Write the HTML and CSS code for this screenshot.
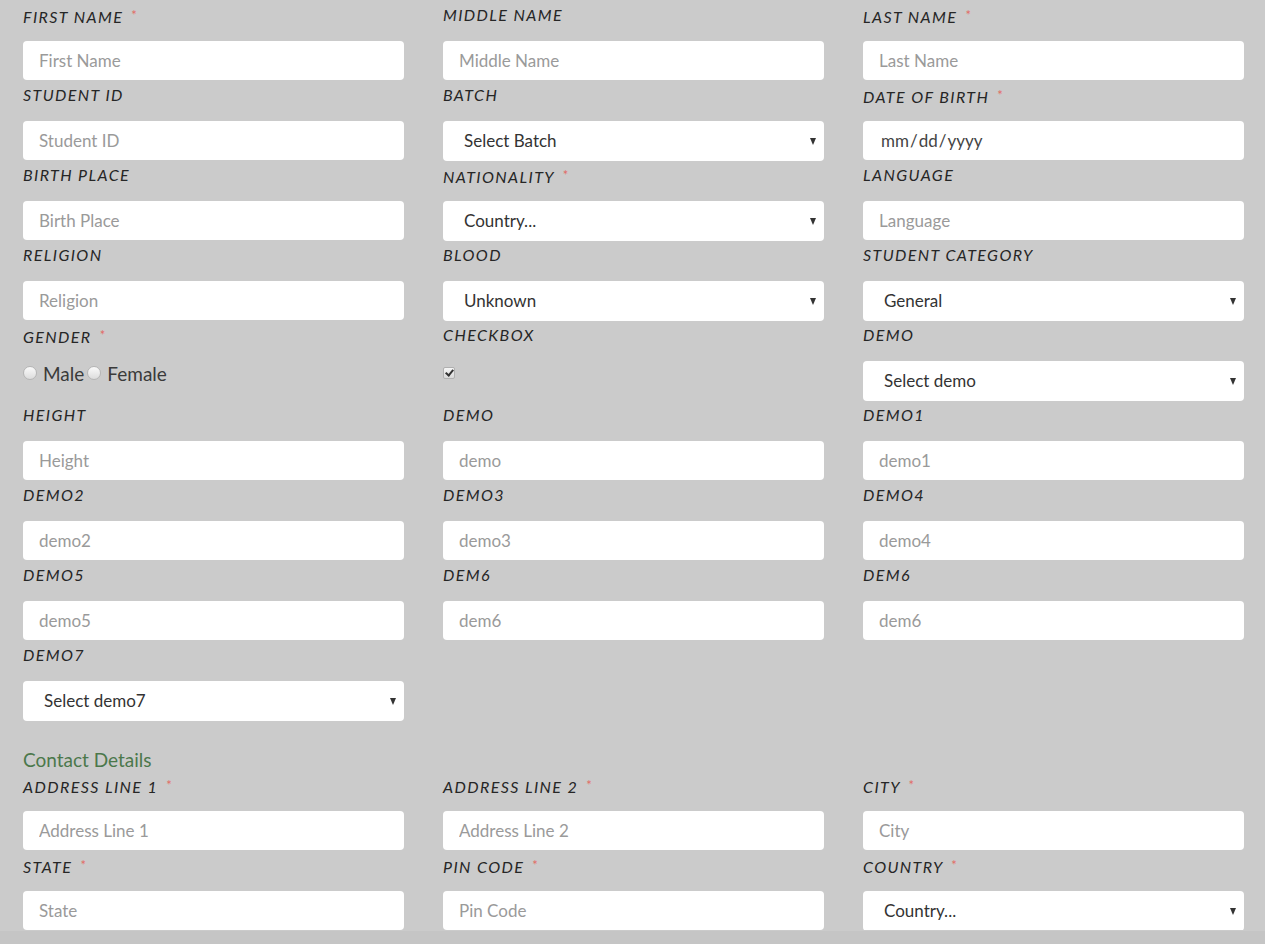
FILE: index.html
```html
<!DOCTYPE html>
<html lang="en">
<head>
<meta charset="utf-8">
<title>Student Form</title>
<link rel="stylesheet" href="styles.css">
</head>
<body>
<form class="form">
  <div class="grid">
    <div class="field"><label class="lbl">First Name <span class="req">*</span></label><input class="ctl" placeholder="First Name"></div>
    <div class="field"><label class="lbl">Middle Name</label><input class="ctl" placeholder="Middle Name"></div>
    <div class="field"><label class="lbl">Last Name <span class="req">*</span></label><input class="ctl" placeholder="Last Name"></div>

    <div class="field"><label class="lbl">Student ID</label><input class="ctl" placeholder="Student ID"></div>
    <div class="field"><label class="lbl">Batch</label><div class="sel"><select class="ctl"><option>Select Batch</option></select></div></div>
    <div class="field"><label class="lbl">Date of Birth <span class="req">*</span></label><input class="ctl date" type="date"></div>

    <div class="field"><label class="lbl">Birth Place</label><input class="ctl" placeholder="Birth Place"></div>
    <div class="field"><label class="lbl">Nationality <span class="req">*</span></label><div class="sel"><select class="ctl"><option>Country...</option></select></div></div>
    <div class="field"><label class="lbl">Language</label><input class="ctl" placeholder="Language"></div>

    <div class="field"><label class="lbl">Religion</label><input class="ctl" placeholder="Religion"></div>
    <div class="field"><label class="lbl">Blood</label><div class="sel"><select class="ctl"><option>Unknown</option></select></div></div>
    <div class="field"><label class="lbl">Student Category</label><div class="sel"><select class="ctl"><option>General</option></select></div></div>

    <div class="field"><label class="lbl">Gender <span class="req">*</span></label>
      <div class="choice"><label class="opt"><input type="radio" name="g" class="radio">Male</label><label class="opt"><input type="radio" name="g" class="radio">Female</label></div>
    </div>
    <div class="field"><label class="lbl">Checkbox</label><div class="choice"><input type="checkbox" class="check" checked></div></div>
    <div class="field"><label class="lbl">Demo</label><div class="sel"><select class="ctl"><option>Select demo</option></select></div></div>

    <div class="field"><label class="lbl">Height</label><input class="ctl" placeholder="Height"></div>
    <div class="field"><label class="lbl">Demo</label><input class="ctl" placeholder="demo"></div>
    <div class="field"><label class="lbl">Demo1</label><input class="ctl" placeholder="demo1"></div>

    <div class="field"><label class="lbl">Demo2</label><input class="ctl" placeholder="demo2"></div>
    <div class="field"><label class="lbl">Demo3</label><input class="ctl" placeholder="demo3"></div>
    <div class="field"><label class="lbl">Demo4</label><input class="ctl" placeholder="demo4"></div>

    <div class="field"><label class="lbl">Demo5</label><input class="ctl" placeholder="demo5"></div>
    <div class="field"><label class="lbl">Dem6</label><input class="ctl" placeholder="dem6"></div>
    <div class="field"><label class="lbl">Dem6</label><input class="ctl" placeholder="dem6"></div>

    <div class="field"><label class="lbl">Demo7</label><div class="sel"><select class="ctl"><option>Select demo7</option></select></div></div>
  </div>

  <h3 class="section">Contact Details</h3>
  <div class="grid">
    <div class="field"><label class="lbl">Address Line 1 <span class="req">*</span></label><input class="ctl" placeholder="Address Line 1"></div>
    <div class="field"><label class="lbl">Address Line 2 <span class="req">*</span></label><input class="ctl" placeholder="Address Line 2"></div>
    <div class="field"><label class="lbl">City <span class="req">*</span></label><input class="ctl" placeholder="City"></div>

    <div class="field"><label class="lbl">State <span class="req">*</span></label><input class="ctl" placeholder="State"></div>
    <div class="field"><label class="lbl">Pin Code <span class="req">*</span></label><input class="ctl" placeholder="Pin Code"></div>
    <div class="field"><label class="lbl">Country <span class="req">*</span></label><div class="sel"><select class="ctl"><option>Country...</option></select></div></div>
  </div>
</form>
<div class="footer"></div>
</body>
</html>
```

FILE: styles.css
```css
html, body {
  margin: 0;
  padding: 0;
  background: #cbcbcb;
  font-family: "Lato", "Open Sans", sans-serif;
  overflow: hidden;
}

.form {
  padding: 0 21px 0 23px;
}

.grid {
  display: grid;
  grid-template-columns: repeat(3, 381px);
  column-gap: 39px;
}

.field {
  display: flex;
  flex-direction: column;
  height: 80px;
}

.lbl {
  display: block;
  height: 22px;
  line-height: 22px;
  padding-top: 4px;
  margin-bottom: 15px;
  font-size: 16px;
  font-style: italic;
  font-weight: 400;
  letter-spacing: 1.4px;
  text-transform: uppercase;
  color: #262626;
}

.req {
  color: #e26b66;
  font-size: 13px;
  font-style: normal;
  vertical-align: 3px;
  margin-left: 3px;
}

.ctl {
  box-sizing: border-box;
  width: 100%;
  height: 40px;
  border: 0;
  border-radius: 4px;
  background: #fff;
  padding: 0 16px;
  font-family: "Lato", "Open Sans", sans-serif;
  font-size: 17px;
  color: #333;
  outline: none;
  margin: 0;
}

.ctl::placeholder {
  color: #9a9a9a;
}

.date {
  color: #444;
  padding-left: 17px;
}

.date::-webkit-calendar-picker-indicator,
.date::-webkit-inner-spin-button,
.date::-webkit-clear-button {
  display: none;
}

.sel {
  position: relative;
}

.sel select {
  -webkit-appearance: none;
  appearance: none;
  padding-left: 21px;
  padding-bottom: 1px;
  color: #333;
}

.sel::after {
  content: "";
  position: absolute;
  right: 8px;
  top: 17px;
  border-left: 3.5px solid transparent;
  border-right: 3.5px solid transparent;
  border-top: 7px solid #333;
  pointer-events: none;
}

.choice {
  height: 40px;
  display: flex;
  align-items: flex-start;
  padding-top: 1px;
  box-sizing: border-box;
}

.opt {
  display: inline-flex;
  align-items: center;
  font-size: 19px;
  color: #3a3a3a;
  margin-right: 3px;
}

.radio {
  -webkit-appearance: none;
  appearance: none;
  width: 14px;
  height: 14px;
  margin: 0 6px 0 0;
  border-radius: 50%;
  border: 1px solid #b5b5b5;
  background: linear-gradient(#fafafa, #dcdcdc);
  box-sizing: border-box;
  position: relative;
  top: -1px;
}

.check {
  -webkit-appearance: none;
  appearance: none;
  width: 12px;
  height: 12px;
  margin: 5px 0 0 0;
  border-radius: 2px;
  border: 1px solid #b0b0b0;
  background: linear-gradient(#f6f6f6, #d8d8d8);
  box-sizing: border-box;
  position: relative;
}

.check::after {
  content: "";
  position: absolute;
  left: 3px;
  top: 0px;
  width: 3px;
  height: 6px;
  border-right: 2px solid #333;
  border-bottom: 2px solid #333;
  transform: rotate(40deg);
}

.section {
  margin: 30px 0 0 0;
  height: 20px;
  line-height: 20px;
  font-size: 19px;
  font-weight: 400;
  color: #4b784b;
}

.footer {
  position: fixed;
  left: 0;
  right: 0;
  bottom: 0;
  height: 13px;
  background: #c5c5c5;
  z-index: -1;
}
```
